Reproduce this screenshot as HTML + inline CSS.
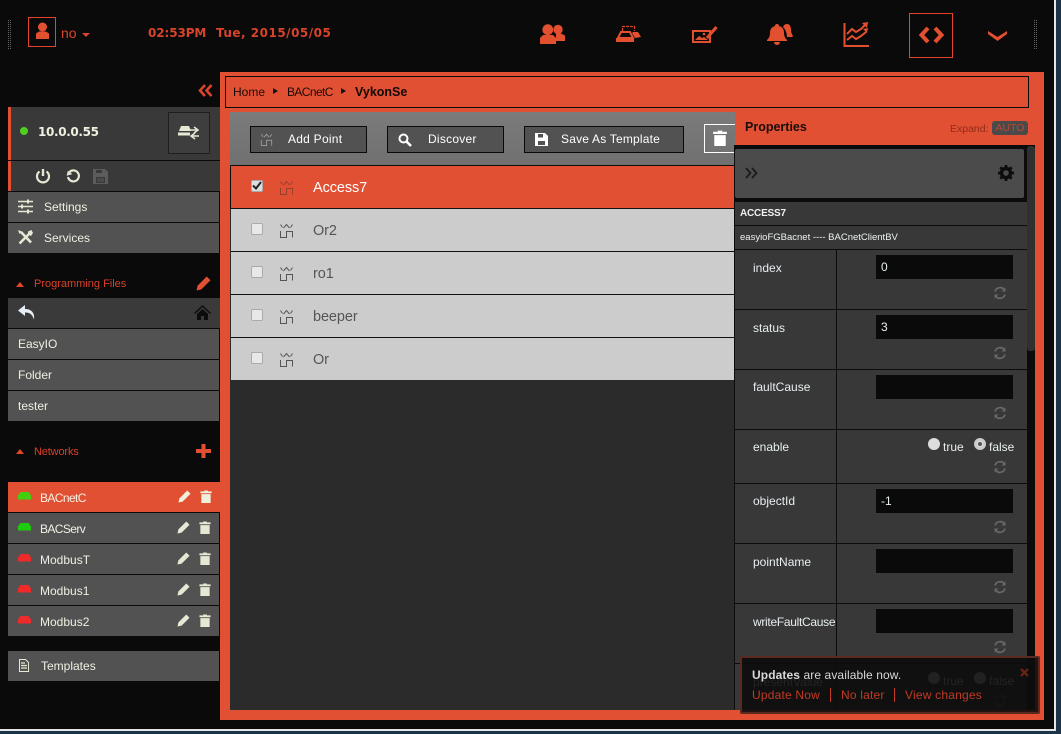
<!DOCTYPE html>
<html><head><meta charset="utf-8"><style>
html,body{margin:0;padding:0;width:1061px;height:734px;overflow:hidden;background:#1b3448}
body{position:relative;font-family:"Liberation Sans",sans-serif;font-size:12px;color:#eef0e2}
div,span,svg{position:absolute;box-sizing:border-box}
.t{white-space:nowrap}
.r{left:8px;width:211px;height:30px;background:#525252;line-height:30px}
.r .t{left:9px;top:0}
.o{color:#e3452b}
.pl{left:231px;width:504px;height:43px;background:#ccc;border-top:1px solid #111}
.cb{left:20px;top:14px;width:12px;height:12px;background:#e8e8e8;border:1px solid #aaa;border-radius:2px}
.pn{left:82px;top:14px;font-size:14.5px;color:#555;white-space:nowrap;letter-spacing:-.1px}
.btn{top:126px;height:27px;background:#525252;border:1px solid #0a0a0a;color:#fff;line-height:25px}
.pr{left:735px;width:292px;background:#383838;border-bottom:1px solid #0c0c0c}
.pr .l{left:18px;top:11px;color:#e8eef0;white-space:nowrap}
.pr .d{left:101px;top:0;bottom:0;width:1px;background:#0c0c0c}
.inp{left:141px;top:5px;width:137px;height:24px;background:#0a0a0a;color:#e8f0f0;padding-left:5px;line-height:24px}
.sp{left:258px;width:14px;height:14px}
</style></head><body>
<svg width="0" height="0" style="left:0;top:0"><defs>
<symbol id="pt" viewBox="0 0 15 15"><path d="M4.500 5L7.500 1.500 10.500 5M1.500 1.500L3.500 4.500M13.500 1.500L11.500 4.500M1.500 8v6.500h6V8.500h6v6" fill="none" stroke="currentColor" stroke-width="1"/></symbol>
<symbol id="hat" viewBox="0 0 13 8"><path d="M2.500 0h8L13 3.500V7.500H0V3.500z" fill="currentColor"/></symbol>
<symbol id="pen" viewBox="0 0 14 14"><path d="M10 .5l3.500 3.500-8.500 8.500L.5 13.500l1-4.500z" fill="currentColor"/></symbol>
<symbol id="can" viewBox="0 0 12 14"><path d="M0 1.500h4V0.500h4v1h4v2H0zM1 4.500h10V14H1z" fill="currentColor"/></symbol>
<symbol id="sp" viewBox="0 0 14 14"><path d="M2 5.500A5.300 5.300 0 0 1 11.500 4M12 8.500A5.300 5.300 0 0 1 2.500 10" fill="none" stroke="#686868" stroke-width="1.700"/><path d="M12.500 1.500v4h-4zM1.500 12.500v-4h4z" fill="#686868"/></symbol>
</defs></svg>

<!-- frame -->
<div style="left:0;top:0;width:1055px;height:729px;background:#0a0a0a"></div>
<div style="left:1054px;top:0;width:2px;height:731px;background:#e6e6e6"></div>
<div style="left:0;top:729px;width:1056px;height:2px;background:#e6e6e6"></div>

<!-- top bar -->
<div style="left:8px;top:20px;width:3px;height:29px;border-left:1px dotted #666;border-right:1px dotted #666"></div>
<div style="left:1034px;top:20px;width:3px;height:29px;border-left:1px dotted #666;border-right:1px dotted #666"></div>
<div style="left:28px;top:17px;width:28px;height:30px;border:1px solid #e3452b"></div>
<svg style="left:35px;top:22px" width="15" height="18" viewBox="0 0 15 18"><circle cx="7.500" cy="5" r="4.500" fill="#e3502f"/><path d="M1 17V11.500L4 9.500h7l3 2V17z" fill="#e3502f"/></svg>
<div class="t" style="left:61px;top:25px;font-size:14px;color:#d9452b">no</div>
<div style="left:82px;top:33px;border:4px solid transparent;border-top:4px solid #d9452b;border-bottom:0"></div>
<div class="t" style="left:148px;top:26px;font-family:'DejaVu Sans',sans-serif;font-weight:bold;font-size:12px;color:#d8432a;letter-spacing:-.1px">02:53PM</div>
<div class="t" style="left:216px;top:26px;font-family:'DejaVu Sans',sans-serif;font-weight:bold;font-size:12px;color:#d8432a;letter-spacing:.5px">Tue, 2015/05/05</div>

<!-- top icons -->
<svg style="left:540px;top:24px" width="26" height="22" viewBox="0 0 26 22"><g fill="#e3502f"><circle cx="18" cy="5.500" r="4.700"/><path d="M16 9.500h5l4 2v5.500h-9z"/><circle cx="7.800" cy="5.700" r="5.400"/><path d="M0 20v-6l3-3h10l3 3v6z"/></g></svg>
<svg style="left:615px;top:25px" width="27" height="20" viewBox="0 0 27 20"><path d="M7.500 6V1.500h12V6" fill="none" stroke="#d9452b" stroke-width="1.300" stroke-dasharray="3 1"/><path d="M6 7h9l3 6H3z" fill="none" stroke="#e3502f" stroke-width="2"/><path d="M1 13h18v4H1z" fill="#e3502f"/><path d="M18 7h5l3 5-6 1-3-5z" fill="#e3502f"/></svg>
<svg style="left:691px;top:25px" width="27" height="19" viewBox="0 0 27 19"><path d="M2 6h17v11H2z" fill="none" stroke="#e3502f" stroke-width="2"/><path d="M4 15l4-4 3 2 2-1 4 3z" fill="#e3502f"/><circle cx="13" cy="9" r="1.300" fill="#e3502f"/><path d="M25.500 2L16 13" stroke="#e3502f" stroke-width="3"/></svg>
<svg style="left:767px;top:23px" width="27" height="23" viewBox="0 0 27 23"><g fill="#e3502f"><path d="M10 1a2 2 0 0 1 2 2c4 1 5 4 5 7 0 3 1 5 3 7v1H0v-1c2-2 3-4 3-7 0-3 1-6 5-7a2 2 0 0 1 2-2z"/><path d="M7 19h6a3 3 0 0 1-6 0z"/><path d="M20 1c3 0 4 3 4 6 0 3 1 4 2 6l-1 1h-5c0-3-1-7-4-10 1-2 2-3 4-3z"/></g></svg>
<svg style="left:843px;top:22px" width="27" height="26" viewBox="0 0 27 26"><path d="M1.500 1v23H26" fill="none" stroke="#e3502f" stroke-width="2"/><path d="M4 12l5-5 4 3 5-3 4-4M4 18l5-4 4 3 5-3 5-4" fill="none" stroke="#e3502f" stroke-width="2"/><path d="M19 1l6-1-1 6zM20 7l5-1-1 5z" fill="#e3502f"/></svg>
<div style="left:909px;top:13px;width:44px;height:45px;border:1px solid #e3452b"></div>
<svg style="left:919px;top:26px" width="25" height="18" viewBox="0 0 25 18"><path d="M9 2L2.500 9 9 16M16 2l6.500 7L16 16" fill="none" stroke="#e3502f" stroke-width="4"/></svg>
<svg style="left:988px;top:30px" width="19" height="11" viewBox="0 0 19 11"><path d="M0 1l9.500 6L19 1v3l-9.500 7L0 4z" fill="#e3502f"/></svg>

<!-- collapse -->
<svg style="left:198px;top:84px" width="15" height="13" viewBox="0 0 15 13"><path d="M7 1L2 6.500 7 12M13.500 1L8.500 6.500l5 5.500" fill="none" stroke="#d9452b" stroke-width="2.600"/></svg>

<!-- main orange -->
<div style="left:220px;top:72px;width:824px;height:648px;background:#e25033"></div>
<div style="left:225px;top:76px;width:804px;height:32px;border:1px solid #0c0c0c"></div>
<div class="t" style="left:233px;top:85px;color:#1a0a06">Home</div>
<div style="left:273px;top:88px;border:3.500px solid transparent;border-left:5px solid #111;border-right:0"></div>
<div class="t" style="left:287px;top:85px;color:#1a0a06;letter-spacing:-.6px">BACnetC</div>
<div style="left:341px;top:88px;border:3.500px solid transparent;border-left:5px solid #111;border-right:0"></div>
<div class="t" style="left:355px;top:85px;color:#140806;font-weight:bold;font-size:12.500px">VykonSe</div>

<!-- content -->
<div style="left:230px;top:112px;width:505px;height:598px;background:#2b2b2b"></div>
<div style="left:230px;top:112px;width:505px;height:53px;background:linear-gradient(#7b7b7b,#707070)"></div>
<div class="btn" style="left:250px;width:117px"></div>
<svg style="left:260px;top:132px;color:#a0a0a0" width="13" height="15"><use href="#pt"/></svg>
<div class="t" style="left:288px;top:132px;color:#fff;letter-spacing:.25px">Add Point</div>
<div class="btn" style="left:387px;width:117px"></div>
<svg style="left:398px;top:133px" width="14" height="14" viewBox="0 0 14 14"><circle cx="5.500" cy="5.500" r="4" fill="none" stroke="#fff" stroke-width="2"/><path d="M8.500 8.500L13 13" stroke="#fff" stroke-width="2.600"/></svg>
<div class="t" style="left:428px;top:132px;color:#fff;letter-spacing:.25px">Discover</div>
<div class="btn" style="left:524px;width:160px"></div>
<svg style="left:535px;top:133px" width="13" height="13" viewBox="0 0 13 13"><path d="M0 0h10l3 3v10H0z" fill="#fff"/><path d="M3 1h5v3.500H3zM3 8h7v4H3z" fill="#525252"/></svg>
<div class="t" style="left:561px;top:132px;color:#fff;letter-spacing:.2px">Save As Template</div>
<div style="left:704px;top:124px;width:31px;height:29px;border:1px solid #fff;border-right:0"></div>
<svg style="left:713px;top:130px;color:#fff" width="14" height="16"><use href="#can"/></svg>

<div class="pl" style="top:165px;background:#e25033;border-top:1px solid #0c0c0c"><div style="left:-1px;top:0;width:1px;height:43px;background:#0c0c0c"></div><div class="cb" style="left:20px;top:14px;background:#ddd"></div><svg style="left:21px;top:15px" width="10" height="9" viewBox="0 0 10 9"><path d="M1 4.500L4 7.500 9 1" fill="none" stroke="#222" stroke-width="2"/></svg><svg style="left:48px;top:14px;color:#96402c" width="15" height="15"><use href="#pt"/></svg><div class="pn" style="color:#fff">Access7</div></div>
<div class="pl" style="top:208px"><div class="cb"></div><svg style="left:48px;top:14px;color:#555" width="15" height="15"><use href="#pt"/></svg><div class="pn">Or2</div></div>
<div class="pl" style="top:251px"><div class="cb"></div><svg style="left:48px;top:14px;color:#555" width="15" height="15"><use href="#pt"/></svg><div class="pn">ro1</div></div>
<div class="pl" style="top:294px"><div class="cb"></div><svg style="left:48px;top:14px;color:#555" width="15" height="15"><use href="#pt"/></svg><div class="pn">beeper</div></div>
<div class="pl" style="top:337px"><div class="cb"></div><svg style="left:48px;top:14px;color:#555" width="15" height="15"><use href="#pt"/></svg><div class="pn">Or</div></div>

<!-- properties -->
<div style="left:735px;top:112px;width:300px;height:33px;background:#e25033"></div>
<div class="t" style="left:745px;top:120px;font-weight:bold;font-size:12.500px;color:#1c0c08">Properties</div>
<div class="t" style="left:950px;top:123px;font-size:10.500px;color:#8f2c1a">Expand:</div>
<div style="left:992px;top:121px;width:36px;height:14px;background:#4a4a4a;border-radius:3px;color:#c2452c;font-size:10.500px;line-height:14px;text-align:center">AUTO</div>
<div style="left:734px;top:145px;width:301px;height:565px;background:#0c0c0c"></div>
<div style="left:1027px;top:146px;width:8px;height:205px;background:#303030;border-radius:3px"></div>
<div style="left:735px;top:149px;width:289px;height:49px;background:#4b4b4b;border-radius:2px"></div>
<svg style="left:745px;top:167px" width="13" height="12" viewBox="0 0 13 12"><path d="M1 1l4.500 5L1 11M7 1l4.500 5L7 11" fill="none" stroke="#1a1a1a" stroke-width="1.700"/></svg>
<svg style="left:998px;top:165px" width="16" height="16" viewBox="0 0 16 16"><circle cx="8" cy="8" r="4.500" fill="none" stroke="#0c0c0c" stroke-width="3.400"/><path d="M8 0v16M0 8h16M2.300 2.300l11.400 11.400M13.700 2.300L2.300 13.700" stroke="#0c0c0c" stroke-width="2.800" stroke-dasharray="2.600 10.800"/></svg>
<div style="left:735px;top:202px;width:292px;height:24px;background:#383838;border-bottom:1px solid #0c0c0c"></div>
<div class="t" style="left:740px;top:208px;font-size:10px;font-weight:bold;color:#f0f0f0;letter-spacing:-.2px">ACCESS7</div>
<div style="left:735px;top:226px;width:292px;height:24px;background:#383838;border-bottom:1px solid #0c0c0c"></div>
<div class="t" style="left:740px;top:232px;font-size:9.500px;color:#eef2f2">easyioFGBacnet ---- BACnetClientBV</div>

<div class="pr" style="top:250px;height:60px"><div class="l">index</div><div class="d"></div><div class="inp">0</div><svg class="sp" style="top:36px"><use href="#sp"/></svg></div>
<div class="pr" style="top:310px;height:60px"><div class="l">status</div><div class="d"></div><div class="inp">3</div><svg class="sp" style="top:36px"><use href="#sp"/></svg></div>
<div class="pr" style="top:370px;height:60px"><div class="l" style="top:10px">faultCause</div><div class="d"></div><div class="inp"></div><svg class="sp" style="top:36px"><use href="#sp"/></svg></div>
<div class="pr" style="top:430px;height:54px"><div class="l" style="top:10px">enable</div><div class="d"></div>
<div style="left:193px;top:8px;width:12px;height:12px;border-radius:50%;background:#ddd"></div><div class="t" style="left:208px;top:10px;color:#e8eef0">true</div>
<div style="left:239px;top:8px;width:12px;height:12px;border-radius:50%;background:#ddd;border:3px solid #ccc"></div><div style="left:243px;top:12px;width:4px;height:4px;border-radius:50%;background:#555"></div><div class="t" style="left:254px;top:10px;color:#e8eef0">false</div>
<svg class="sp" style="top:30px"><use href="#sp"/></svg></div>
<div class="pr" style="top:484px;height:60px"><div class="l" style="top:10px">objectId</div><div class="d"></div><div class="inp">-1</div><svg class="sp" style="top:36px"><use href="#sp"/></svg></div>
<div class="pr" style="top:544px;height:60px"><div class="l">pointName</div><div class="d"></div><div class="inp"></div><svg class="sp" style="top:36px"><use href="#sp"/></svg></div>
<div class="pr" style="top:604px;height:60px"><div class="l" style="letter-spacing:-.3px">writeFaultCause</div><div class="d"></div><div class="inp"></div><svg class="sp" style="top:36px"><use href="#sp"/></svg></div>
<div class="pr" style="top:664px;height:46px;border-bottom:0"><div class="l">presentValue</div><div class="d"></div>
<div style="left:193px;top:8px;width:12px;height:12px;border-radius:50%;background:#ddd"></div><div class="t" style="left:208px;top:10px;color:#e8eef0">true</div>
<div style="left:239px;top:8px;width:12px;height:12px;border-radius:50%;background:#ddd"></div><div class="t" style="left:254px;top:10px;color:#e8eef0">false</div>
<svg class="sp" style="top:30px"><use href="#sp"/></svg></div>

<!-- notification -->
<div style="left:740px;top:656px;width:300px;height:58px;background:rgba(12,12,12,.9);border:2px solid #5a2a20;border-radius:2px"></div>
<div class="t" style="left:752px;top:668px;color:#d8d8d8;letter-spacing:.1px"><b>Updates</b> are available now.</div>
<div class="t" style="left:752px;top:688px;color:#c03a24;letter-spacing:.2px">Update Now</div>
<div style="left:830px;top:688px;width:1px;height:14px;background:#c03a24"></div>
<div class="t" style="left:841px;top:688px;color:#c03a24;letter-spacing:.2px">No later</div>
<div style="left:894px;top:688px;width:1px;height:14px;background:#c03a24"></div>
<div class="t" style="left:905px;top:688px;color:#c03a24;letter-spacing:.2px">View changes</div>
<svg style="left:1020px;top:668px" width="9" height="9" viewBox="0 0 9 9"><path d="M1 1l7 7M8 1L1 8" stroke="#6e2315" stroke-width="2.200"/></svg>

<!-- sidebar -->
<div style="left:8px;top:107px;width:212px;height:53px;background:#393939;border-left:3px solid #e25033"></div>
<div style="left:20px;top:127px;width:8px;height:8px;border-radius:50%;background:#4fd020"></div>
<div class="t" style="left:38px;top:125px;font-family:'DejaVu Sans',sans-serif;font-weight:bold;font-size:12px;color:#eef0e0;letter-spacing:-.35px">10.0.0.55</div>
<div style="left:168px;top:112px;width:42px;height:42px;background:#3e3e3e;border:1px solid #1e1e1e"></div>
<svg style="left:178px;top:125px" width="22" height="16" viewBox="0 0 22 16"><path d="M3 1h8l2 5H1zM0 7.500h12v3H0z" fill="#e6e8d4"/><path d="M12 5h7M16 2l4 3-4 3M21 11h-8M17 8l-4 3 4 3" fill="none" stroke="#e6e8d4" stroke-width="1.500"/></svg>
<div style="left:8px;top:161px;width:212px;height:30px;background:#393939;border-left:3px solid #e25033"></div>
<svg style="left:35px;top:168px" width="16" height="16" viewBox="0 0 16 16"><path d="M4.500 3.500a6 6 0 1 0 7 0" fill="none" stroke="#e6e8d4" stroke-width="2.200"/><path d="M8 1v7" stroke="#e6e8d4" stroke-width="2.400"/></svg>
<svg style="left:65px;top:168px" width="16" height="16" viewBox="0 0 16 16"><path d="M3 9a5.500 5.500 0 1 0 1.500-5" fill="none" stroke="#e6e8d4" stroke-width="2.200"/><path d="M1 7h6L3.500 2.500z" fill="#e6e8d4" transform="rotate(-15 4 5)"/></svg>
<svg style="left:93px;top:169px" width="15" height="15" viewBox="0 0 15 15"><path d="M0 0h12l3 3v12H0z" fill="#5c5c5c"/><path d="M3 1h6v3H3zM3 8h9v6H3z" fill="#393939"/><path d="M4 10h7M4 12h7" stroke="#5c5c5c"/></svg>

<div class="r" style="top:192px"></div>
<svg style="left:18px;top:199px" width="15" height="15" viewBox="0 0 15 15"><path d="M0 2.500h15M0 7.500h15M0 12.500h15" stroke="#e6e8d4" stroke-width="1.500"/><path d="M9 0.500h2v4H9zM3 5.500h2v4H3zM9 10.500h2v4H9z" fill="#e6e8d4"/></svg>
<div class="t" style="left:44px;top:200px">Settings</div>
<div class="r" style="top:223px"></div>
<svg style="left:18px;top:230px" width="15" height="15" viewBox="0 0 15 15"><path d="M1.500 13.500L11 4M3 2l10 10.500" stroke="#e6e8d4" stroke-width="2.600"/><path d="M10 1.500L13.500 0 15 3l-2 3-3-2zM0 0l4 1.500L1.500 4z" fill="#e6e8d4"/></svg>
<div class="t" style="left:44px;top:231px">Services</div>

<div style="left:16px;top:282px;border:4.500px solid transparent;border-bottom:5px solid #e3452b;border-top:0"></div>
<div class="t" style="left:34px;top:278px;font-size:11px;color:#d9402a">Programming Files</div>
<svg style="left:196px;top:276px;color:#e25033" width="15" height="15"><use href="#pen"/></svg>
<div style="left:8px;top:298px;width:212px;height:30px;background:#3a3a3a"></div>
<svg style="left:18px;top:305px" width="17" height="15" viewBox="0 0 17 15"><path d="M7 0L0 5.500 7 11V7.500c4 0 7 1 9 7 1-7-3-10.500-9-10.500z" fill="#e8eef5"/></svg>
<svg style="left:194px;top:305px" width="17" height="15" viewBox="0 0 17 15"><path d="M8.500 0L17 8l-1 1-7.500-7L1 9 0 8z" fill="#0c0c0c"/><path d="M3 9l5.500-5L14 9v6h-4v-4H7v4H3z" fill="#0c0c0c"/></svg>
<div class="r" style="top:329px"><div class="t" style="left:10px">EasyIO</div></div>
<div class="r" style="top:360px"><div class="t" style="left:10px">Folder</div></div>
<div class="r" style="top:391px"><div class="t" style="left:10px">tester</div></div>

<div style="left:16px;top:449px;border:4.500px solid transparent;border-bottom:5px solid #e3452b;border-top:0"></div>
<div class="t" style="left:34px;top:446px;font-size:11px;color:#d9402a;letter-spacing:-.15px">Networks</div>
<svg style="left:196px;top:444px" width="15" height="14" viewBox="0 0 15 14"><path d="M0 5h5.500V0h4v5H15v4H9.500v5h-4V9H0z" fill="#e25033"/></svg>

<div style="left:8px;top:482px;width:212px;height:30px;background:#e25033"></div>
<svg style="left:18px;top:492px;color:#41cf10" width="13" height="8"><use href="#hat"/></svg>
<div class="t" style="left:40px;top:491px;color:#f8f0e0;letter-spacing:-.6px">BACnetC</div>
<svg style="left:178px;top:490px;color:#eef0dc" width="13" height="13"><use href="#pen"/></svg>
<svg style="left:200px;top:490px;color:#eef0dc" width="12" height="13"><use href="#can"/></svg>

<div class="r" style="top:513px"><svg style="left:10px;top:10px;color:#1ecb0e" width="13" height="8"><use href="#hat"/></svg><div class="t" style="left:32px;top:1px;letter-spacing:-.6px">BACServ</div><svg style="left:169px;top:8px;color:#e6e8d4" width="13" height="13"><use href="#pen"/></svg><svg style="left:191px;top:8px;color:#e6e8d4" width="12" height="13"><use href="#can"/></svg></div>
<div class="r" style="top:544px"><svg style="left:10px;top:10px;color:#ee2a2a" width="13" height="8"><use href="#hat"/></svg><div class="t" style="left:32px;top:1px">ModbusT</div><svg style="left:169px;top:8px;color:#e6e8d4" width="13" height="13"><use href="#pen"/></svg><svg style="left:191px;top:8px;color:#e6e8d4" width="12" height="13"><use href="#can"/></svg></div>
<div class="r" style="top:575px"><svg style="left:10px;top:10px;color:#ee2a2a" width="13" height="8"><use href="#hat"/></svg><div class="t" style="left:32px;top:1px">Modbus1</div><svg style="left:169px;top:8px;color:#e6e8d4" width="13" height="13"><use href="#pen"/></svg><svg style="left:191px;top:8px;color:#e6e8d4" width="12" height="13"><use href="#can"/></svg></div>
<div class="r" style="top:606px"><svg style="left:10px;top:10px;color:#ee2a2a" width="13" height="8"><use href="#hat"/></svg><div class="t" style="left:32px;top:1px">Modbus2</div><svg style="left:169px;top:8px;color:#e6e8d4" width="13" height="13"><use href="#pen"/></svg><svg style="left:191px;top:8px;color:#e6e8d4" width="12" height="13"><use href="#can"/></svg></div>

<div class="r" style="top:651px"><svg style="left:11px;top:8px" width="10" height="13" viewBox="0 0 10 13"><path d="M0.500 0.500h6l3 3v9h-9z" fill="none" stroke="#e6e8d4"/><path d="M2 4h4M2 6.500h6M2 9h6" stroke="#e6e8d4" stroke-width="1.300"/></svg><div class="t" style="left:33px">Templates</div></div>
</body></html>
